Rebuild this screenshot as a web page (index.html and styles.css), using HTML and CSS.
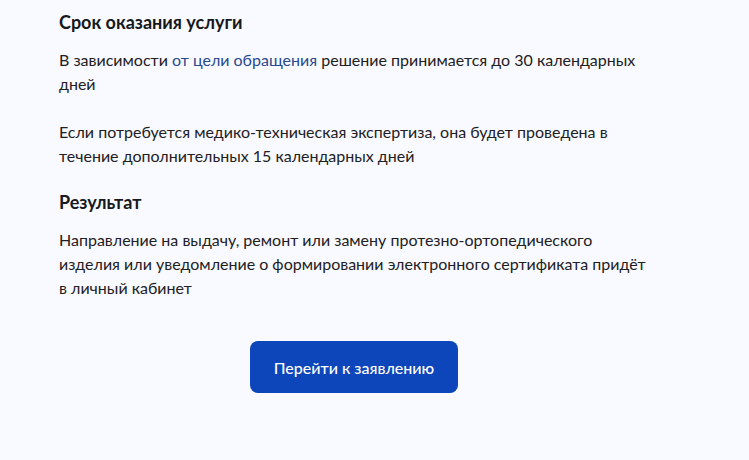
FILE: index.html
```html
<!DOCTYPE html>
<html lang="ru">
<head>
    <meta charset="UTF-8">
    <title>Услуга</title>
    <link rel="stylesheet" href="styles.css">
</head>
<body>
    <div class="content">
        <h2 class="title">Срок оказания услуги</h2>
        <p class="text">В зависимости <a href="#" class="link">от цели обращения</a> решение принимается до 30 календарных дней</p>
        <p class="text">Если потребуется медико-техническая экспертиза, она будет проведена в течение дополнительных 15 календарных дней</p>

        <h2 class="title">Результат</h2>
        <p class="text">Направление на выдачу, ремонт или замену протезно-ортопедического изделия или уведомление о формировании электронного сертификата придёт в личный кабинет</p>

        <div class="actions">
            <button class="btn">Перейти к заявлению</button>
        </div>
    </div>
</body>
</html>
```

FILE: styles.css
```css
body {
    margin: 0;
    background-color: #f8faff;
    font-family: Lato, "Noto Sans", sans-serif;
    color: #1e2023;
}

.content {
    width: 590px;
    margin-left: 59px;
    padding-top: 10px;
}

.title {
    margin: 0 0 14px;
    font-size: 18px;
    line-height: 24px;
    font-weight: 700;
    color: #16181c;
}

.text {
    margin: 0 0 24px;
    font-size: 16px;
    line-height: 24px;
}

.text + .title {
    margin-top: -2px;
}

.link {
    color: #284a90;
    text-decoration: none;
}

.actions {
    display: flex;
    justify-content: center;
    padding-top: 17px;
}

.btn {
    width: 208px;
    height: 52px;
    border: none;
    border-radius: 8px;
    background-color: #0d45ba;
    color: #fff;
    font-family: Lato, "Noto Sans", sans-serif;
    font-size: 16px;
    font-weight: 500;
    cursor: pointer;
}
```
